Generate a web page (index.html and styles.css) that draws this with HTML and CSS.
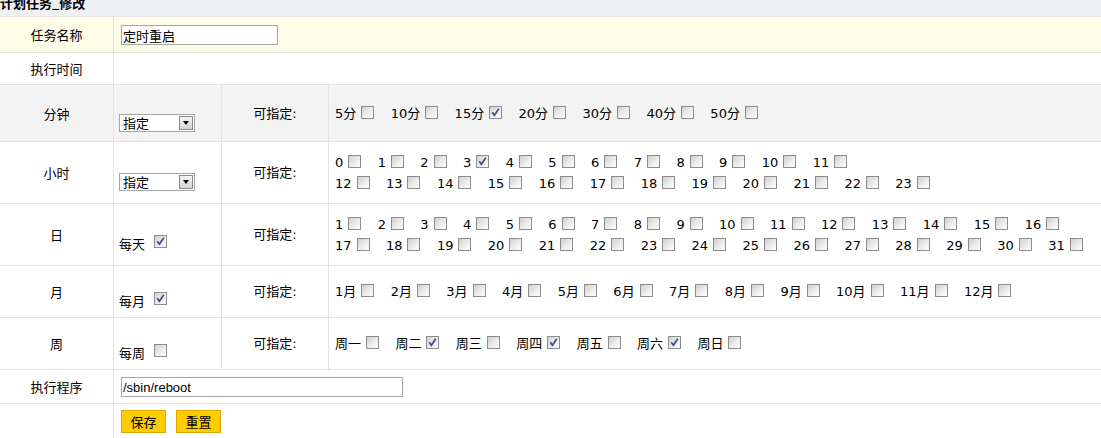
FILE: index.html
```html
<!DOCTYPE html>
<html>
<head>
    <meta charset="utf-8">
    <title>计划任务_修改</title>
    <link rel="stylesheet" href="styles.css">
</head>
<body>
<div class="title"><h3>计划任务_修改</h3></div>
<table class="form">
    <colgroup>
        <col class="c1">
        <col class="c2">
        <col class="c3">
        <col>
    </colgroup>
    <tr class="r-name hl">
        <td class="lab">任务名称</td>
        <td class="val" colspan="3"><input class="txt short" type="text" value="定时重启"></td>
    </tr>
    <tr class="r-time">
        <td class="lab">执行时间</td>
        <td class="val" colspan="3"></td>
    </tr>
    <!-- 分钟 -->
    <tr class="r-min gray">
        <td class="lab">分钟</td>
        <td class="mode"><div class="mode-in"><span class="sel"><select><option>指定</option></select><i></i></span></div></td>
        <td class="can">可指定:</td>
        <td class="opts">
            <span class="opt">5分<span class="cb"></span></span><span class="opt">10分<span class="cb"></span></span><span class="opt">15分<span class="cb on"><svg viewBox="0 0 11 11" width="11" height="11"><path d="M2.3 5.2 L4.4 8.2 L8.8 1.8" fill="none" stroke="#3b4a8e" stroke-width="1.7"/></svg></span></span><span class="opt">20分<span class="cb"></span></span><span class="opt">30分<span class="cb"></span></span><span class="opt">40分<span class="cb"></span></span><span class="opt">50分<span class="cb"></span></span>
        </td>
    </tr>
    <!-- 小时 -->
    <tr class="r-hour">
        <td class="lab">小时</td>
        <td class="mode"><div class="mode-in"><span class="sel"><select><option>指定</option></select><i></i></span></div></td>
        <td class="can">可指定:</td>
        <td class="opts">
            <span class="opt">0<span class="cb"></span></span><span class="opt">1<span class="cb"></span></span><span class="opt">2<span class="cb"></span></span><span class="opt">3<span class="cb on"><svg viewBox="0 0 11 11" width="11" height="11"><path d="M2.3 5.2 L4.4 8.2 L8.8 1.8" fill="none" stroke="#3b4a8e" stroke-width="1.7"/></svg></span></span><span class="opt">4<span class="cb"></span></span><span class="opt">5<span class="cb"></span></span><span class="opt">6<span class="cb"></span></span><span class="opt">7<span class="cb"></span></span><span class="opt">8<span class="cb"></span></span><span class="opt">9<span class="cb"></span></span><span class="opt">10<span class="cb"></span></span><span class="opt">11<span class="cb"></span></span><br>
            <span class="opt">12<span class="cb"></span></span><span class="opt">13<span class="cb"></span></span><span class="opt">14<span class="cb"></span></span><span class="opt">15<span class="cb"></span></span><span class="opt">16<span class="cb"></span></span><span class="opt">17<span class="cb"></span></span><span class="opt">18<span class="cb"></span></span><span class="opt">19<span class="cb"></span></span><span class="opt">20<span class="cb"></span></span><span class="opt">21<span class="cb"></span></span><span class="opt">22<span class="cb"></span></span><span class="opt">23<span class="cb"></span></span>
        </td>
    </tr>
    <!-- 日 -->
    <tr class="r-day">
        <td class="lab">日</td>
        <td class="mode"><div class="mode-in">每天<span class="cb every on"><svg viewBox="0 0 11 11" width="11" height="11"><path d="M2.3 5.2 L4.4 8.2 L8.8 1.8" fill="none" stroke="#3b4a8e" stroke-width="1.7"/></svg></span></div></td>
        <td class="can">可指定:</td>
        <td class="opts">
            <span class="opt">1<span class="cb"></span></span><span class="opt">2<span class="cb"></span></span><span class="opt">3<span class="cb"></span></span><span class="opt">4<span class="cb"></span></span><span class="opt">5<span class="cb"></span></span><span class="opt">6<span class="cb"></span></span><span class="opt">7<span class="cb"></span></span><span class="opt">8<span class="cb"></span></span><span class="opt">9<span class="cb"></span></span><span class="opt">10<span class="cb"></span></span><span class="opt">11<span class="cb"></span></span><span class="opt">12<span class="cb"></span></span><span class="opt">13<span class="cb"></span></span><span class="opt">14<span class="cb"></span></span><span class="opt">15<span class="cb"></span></span><span class="opt">16<span class="cb"></span></span><br>
            <span class="opt">17<span class="cb"></span></span><span class="opt">18<span class="cb"></span></span><span class="opt">19<span class="cb"></span></span><span class="opt">20<span class="cb"></span></span><span class="opt">21<span class="cb"></span></span><span class="opt">22<span class="cb"></span></span><span class="opt">23<span class="cb"></span></span><span class="opt">24<span class="cb"></span></span><span class="opt">25<span class="cb"></span></span><span class="opt">26<span class="cb"></span></span><span class="opt">27<span class="cb"></span></span><span class="opt">28<span class="cb"></span></span><span class="opt">29<span class="cb"></span></span><span class="opt">30<span class="cb"></span></span><span class="opt">31<span class="cb"></span></span>
        </td>
    </tr>
    <!-- 月 -->
    <tr class="r-month">
        <td class="lab">月</td>
        <td class="mode"><div class="mode-in">每月<span class="cb every on"><svg viewBox="0 0 11 11" width="11" height="11"><path d="M2.3 5.2 L4.4 8.2 L8.8 1.8" fill="none" stroke="#3b4a8e" stroke-width="1.7"/></svg></span></div></td>
        <td class="can">可指定:</td>
        <td class="opts">
            <span class="opt">1月<span class="cb"></span></span><span class="opt">2月<span class="cb"></span></span><span class="opt">3月<span class="cb"></span></span><span class="opt">4月<span class="cb"></span></span><span class="opt">5月<span class="cb"></span></span><span class="opt">6月<span class="cb"></span></span><span class="opt">7月<span class="cb"></span></span><span class="opt">8月<span class="cb"></span></span><span class="opt">9月<span class="cb"></span></span><span class="opt">10月<span class="cb"></span></span><span class="opt">11月<span class="cb"></span></span><span class="opt">12月<span class="cb"></span></span>
        </td>
    </tr>
    <!-- 周 -->
    <tr class="r-week">
        <td class="lab">周</td>
        <td class="mode"><div class="mode-in">每周<span class="cb every"></span></div></td>
        <td class="can">可指定:</td>
        <td class="opts">
            <span class="opt">周一<span class="cb"></span></span><span class="opt">周二<span class="cb on"><svg viewBox="0 0 11 11" width="11" height="11"><path d="M2.3 5.2 L4.4 8.2 L8.8 1.8" fill="none" stroke="#3b4a8e" stroke-width="1.7"/></svg></span></span><span class="opt">周三<span class="cb"></span></span><span class="opt">周四<span class="cb on"><svg viewBox="0 0 11 11" width="11" height="11"><path d="M2.3 5.2 L4.4 8.2 L8.8 1.8" fill="none" stroke="#3b4a8e" stroke-width="1.7"/></svg></span></span><span class="opt">周五<span class="cb"></span></span><span class="opt">周六<span class="cb on"><svg viewBox="0 0 11 11" width="11" height="11"><path d="M2.3 5.2 L4.4 8.2 L8.8 1.8" fill="none" stroke="#3b4a8e" stroke-width="1.7"/></svg></span></span><span class="opt">周日<span class="cb"></span></span>
        </td>
    </tr>
    <tr class="r-prog">
        <td class="lab">执行程序</td>
        <td class="val" colspan="3"><input class="txt long" type="text" value="/sbin/reboot"></td>
    </tr>
    <tr class="r-btn">
        <td class="lab"></td>
        <td class="val btns" colspan="3">
            <div class="btn-row"><button class="btn">保存</button><button class="btn">重置</button></div>
        </td>
    </tr>
</table>
</body>
</html>
```
FILE: styles.css
```css
body {
    margin: 0;
    background: #fff;
    color: #000;
    font: 13px/21px "DejaVu Sans", "Noto Sans CJK SC", sans-serif;
}

.title {
    height: 16px;
    overflow: hidden;
    background: #eff0f2;
    border-bottom: 1px solid #e3e3e3;
}

.title h3 {
    margin: -6px 0 0 0;
    font-size: 13px;
    line-height: 17px;
    font-weight: bold;
    font-family: "Noto Sans CJK SC", sans-serif;
}

.form {
    width: 100%;
    table-layout: fixed;
    border-collapse: separate;
    border-spacing: 0;
}

.c1 {
    width: 114px;
}

.c2 {
    width: 108px;
}

.c3 {
    width: 107px;
}

.form td {
    box-sizing: border-box;
    padding: 0;
    border-bottom: 1px solid #e3e3e3;
    vertical-align: middle;
}

.form td.lab, .form td.mode, .form td.can {
    border-right: 1px solid #e3e3e3;
}

.hl td {
    background: #fefee8;
}

.gray td {
    background: #f3f3f3;
}

.r-name td { height: 36px; }
.r-time td { height: 32px; }
.r-min td { height: 57px; }
.r-hour td { height: 62px; }
.r-day td { height: 62px; }
.r-month td { height: 52px; }
.r-week td { height: 52px; }
.r-prog td { height: 34px; }
.r-btn td { height: 40px; border-bottom: 0; }

.lab {
    text-align: center;
    font-family: "Noto Sans CJK SC", sans-serif;
}

.can {
    text-align: center;
    font-family: "DejaVu Sans", "Noto Sans CJK SC", sans-serif;
}

.val {
    padding-left: 7px !important;
}

.mode {
    padding-left: 5px !important;
}

.mode-in {
    margin-top: 20px;
    white-space: nowrap;
}

.opts {
    padding-left: 6px !important;
    white-space: nowrap;
}

.opt {
    display: inline-block;
    margin-right: 16.4px;
}

.cb {
    display: inline-block;
    position: relative;
    width: 13px;
    height: 13px;
    box-sizing: border-box;
    margin-left: 5px;
    border: 1px solid #8d8d8d;
    background: linear-gradient(135deg, #cfcfcf 0%, #ececec 55%, #fff 100%);
    vertical-align: -1px;
}

.cb svg {
    display: block;
}

.cb.every {
    margin-left: 9px;
    vertical-align: 1px;
}

.sel {
    position: relative;
    display: inline-block;
    width: 76px;
    height: 18px;
    box-sizing: border-box;
    border: 1px solid #a5a5a5;
    background: #fff;
    vertical-align: 0;
}

.sel select {
    -webkit-appearance: none;
    appearance: none;
    display: block;
    width: 100%;
    height: 16px;
    margin: 0;
    padding: 0 0 0 3px;
    border: 0;
    background: transparent;
    color: #000;
    font: 13px/16px "Noto Sans CJK SC", sans-serif;
}

.sel i {
    position: absolute;
    right: 1px;
    top: 1px;
    width: 14px;
    height: 14px;
    box-sizing: border-box;
    border: 1px solid #8a8a8a;
    background: linear-gradient(#f6f6f6, #d4d4d4);
}

.sel i:after {
    content: "";
    position: absolute;
    left: 3px;
    top: 4px;
    border-left: 3px solid transparent;
    border-right: 3px solid transparent;
    border-top: 4px solid #000;
}

.txt {
    height: 20px;
    box-sizing: border-box;
    margin: 0;
    padding: 0 1px;
    border: 1px solid #a5a5a5;
    background: #fff;
    color: #000;
    font: 13px "Liberation Sans", "Noto Sans CJK SC", sans-serif;
    vertical-align: middle;
}

.short {
    width: 157px;
}

.long {
    width: 282px;
}

.btns {
    vertical-align: top !important;
    padding-top: 6px !important;
}

.btn-row {
    display: flex;
    gap: 10px;
}

.btn {
    width: 45px;
    height: 23px;
    padding: 0;
    border: 1px solid #e2a600;
    background: #ffcc00;
    color: #000;
    font: 13px/21px "Noto Sans CJK SC", sans-serif;
}
```
